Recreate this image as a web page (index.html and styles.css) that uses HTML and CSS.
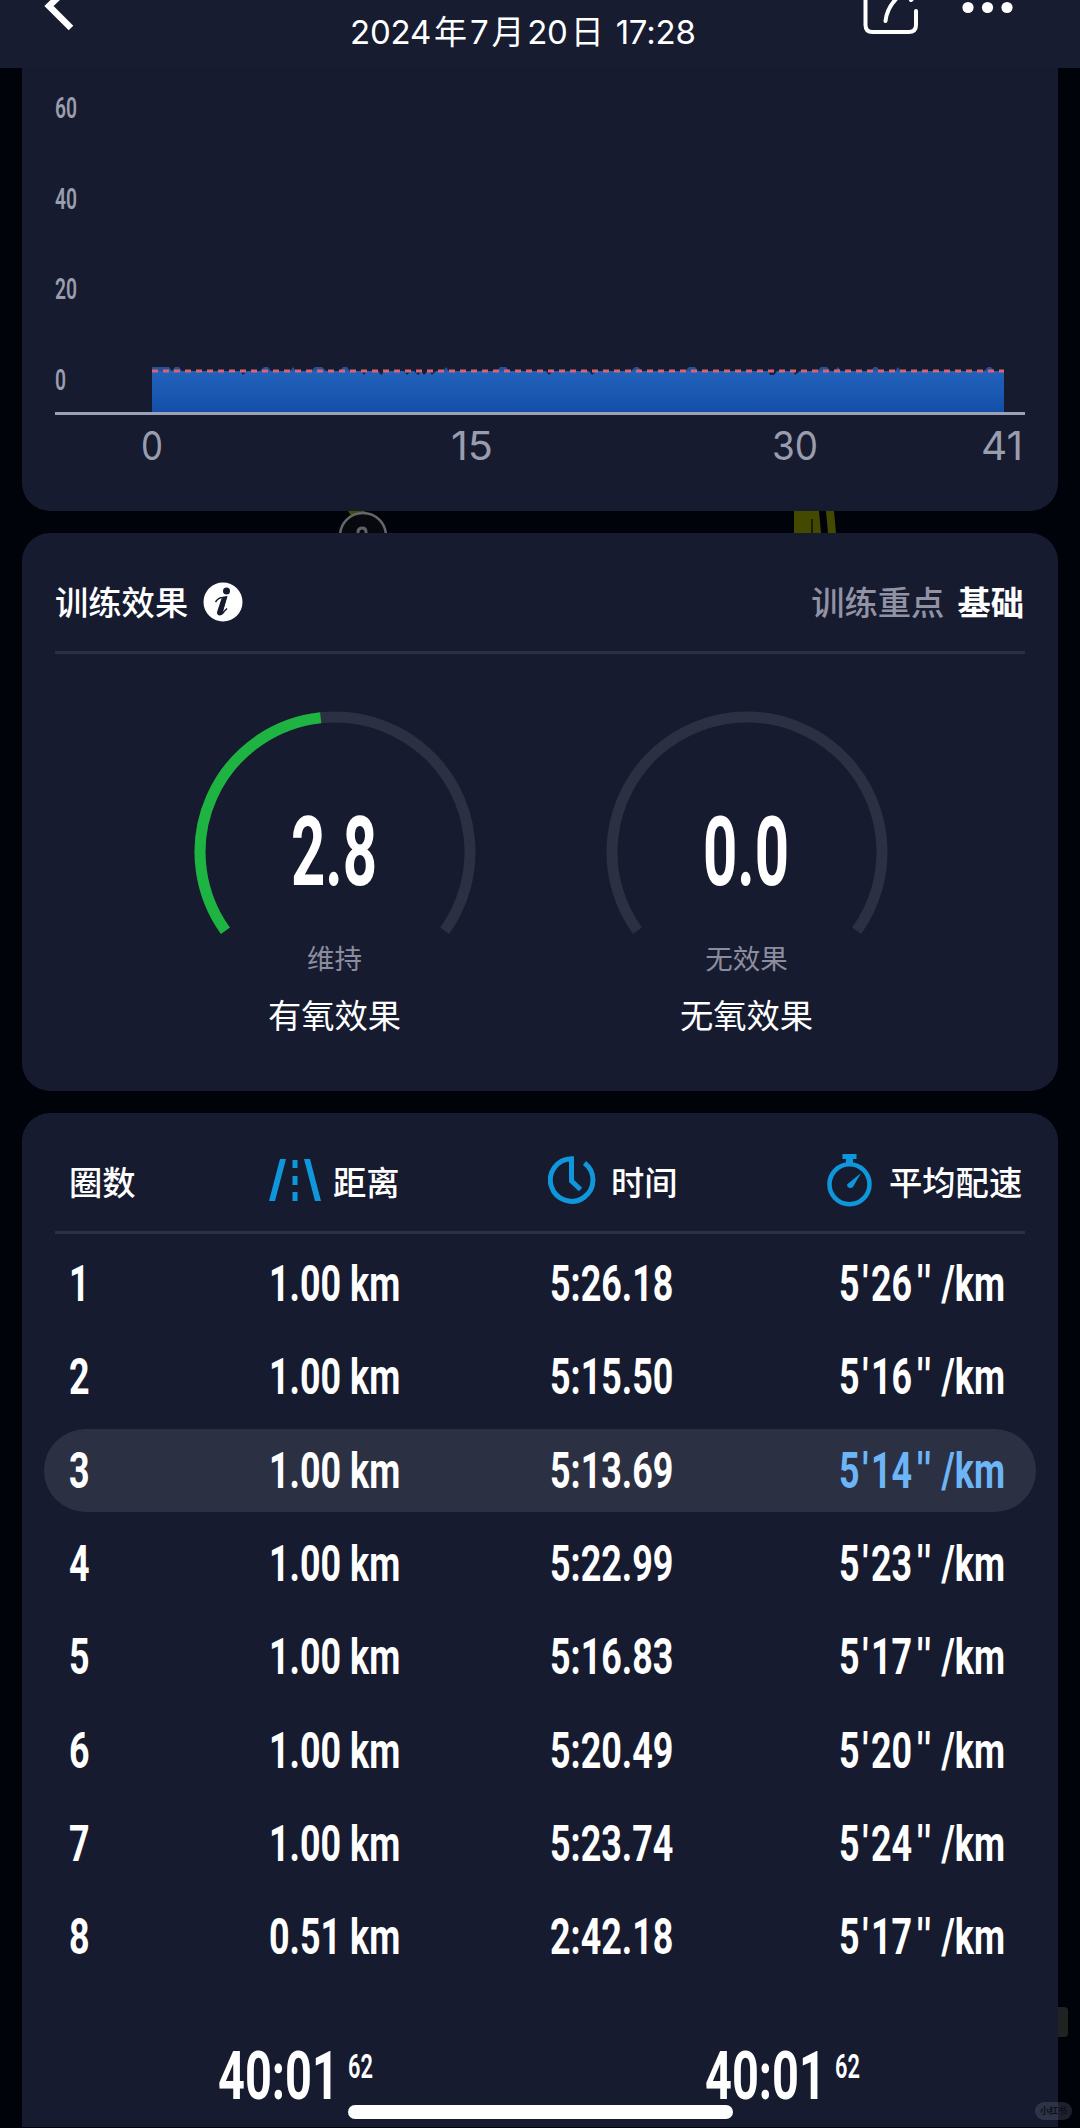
FILE: index.html
```html
<!DOCTYPE html>
<html lang="zh-CN">
<head>
    <meta charset="UTF-8">
    <meta name="viewport" content="width=device-width, initial-scale=1.0">
    <title>2024年7月20日 17:28</title>
    <link rel="stylesheet" href="styles.css">
</head>
<body>

<div class="screen">
    <header class="topbar">
        <svg class="back" width="34" height="34" viewBox="0 0 34 34">
            <path d="M34 -20 L7 6 L29 28" fill="none" stroke="#fff" stroke-width="6.500"/>
        </svg>
        <h1>2024<b>年</b>7<b>月</b>20<b>日</b> 17:28</h1>
        <div class="actions">
            <svg width="58" height="38" viewBox="0 0 58 38" fill="none" stroke="#fff" stroke-width="4" stroke-linecap="round">
                <path d="M3.500 -6V25Q3.500 32 10.500 32H46.500Q54 32 54 25V11"/>
                <path d="M23.500 21Q25 7 37 -4"/>
                <path d="M49 0L54 -5"/>
            </svg>
            <svg width="52" height="16" viewBox="0 0 52 16">
                <circle cx="6" cy="7.500" r="5.600" fill="#fff"/>
                <circle cx="25.500" cy="7.500" r="5.600" fill="#fff"/>
                <circle cx="45" cy="7.500" r="5.600" fill="#fff"/>
            </svg>
        </div>
    </header>

    <section class="card chart-card">
        <svg class="chart" width="1036" height="443" viewBox="22 68 1036 443">
            <defs>
                <linearGradient id="area" x1="0" y1="0" x2="0" y2="1">
                    <stop offset="0" stop-color="#2262bb"/>
                    <stop offset="1" stop-color="#134fa9"/>
                </linearGradient>
            </defs>
            <g class="y-label">
                <text x="55" y="118" textLength="22" lengthAdjust="spacingAndGlyphs">60</text>
                <text x="55" y="209" textLength="22" lengthAdjust="spacingAndGlyphs">40</text>
                <text x="55" y="299" textLength="22" lengthAdjust="spacingAndGlyphs">20</text>
                <text x="55" y="390" textLength="11" lengthAdjust="spacingAndGlyphs">0</text>
            </g>
            <rect x="152" y="371" width="852" height="42" fill="url(#area)"/>
            <path fill="#27509b" d="M152 371V367H169L172 371ZM172 371L175 367H179L182 371ZM260 371L264 367H268L271 371ZM290 371L293 367L296 371ZM311 371L315 367H322L326 371ZM340 371L343 367H347L350 371ZM443 371L446 367L449 371ZM497 371L500 367H506L509 371ZM631 371L635 367H638L642 371ZM685 371L689 367H695L698 371ZM817 371L821 367H827L830 371ZM834 371L838 367L841 371ZM871 371L874 367H877L880 371ZM895 371L898 367L901 371ZM984 371L988 367H991L994 371Z"/>
            <path fill="#1b1e38" d="M240 371H247L243 375ZM361 371H367L364 375ZM378 371H385L381 375ZM404 371H411L407 375ZM414 371H422L418 375ZM421 371H428L424 375ZM429 371H436L432 375ZM546 371H553L549 375ZM589 371H596L592 375ZM768 371H777L774 375H770ZM793 371H800L795 375Z"/>
            <path d="M152 371H1004" stroke="#d9646f" stroke-width="3" stroke-dasharray="6 5"/>
            <rect x="55" y="412" width="970" height="3" fill="#9ba2b5"/>
            <g class="x-label">
                <text x="141" y="459.500" textLength="22" lengthAdjust="spacingAndGlyphs">0</text>
                <text x="451" y="459.500" textLength="42" lengthAdjust="spacingAndGlyphs">15</text>
                <text x="772" y="459.500" textLength="46" lengthAdjust="spacingAndGlyphs">30</text>
                <text x="981" y="459.500" textLength="42" lengthAdjust="spacingAndGlyphs">41</text>
            </g>
        </svg>
    </section>

    <!-- strip of the route map between the cards -->
    <svg class="map-strip" width="1080" height="22" viewBox="0 511 1080 22">
        <path d="M348 511H366L352 517Z" fill="#454c06"/>
        <circle cx="363" cy="536" r="23" fill="#07090e" stroke="#65676b" stroke-width="2.500"/>
        <path d="M358 537V532Q358 528 362.500 528Q366 528 366 532V537" fill="none" stroke="#606267" stroke-width="3"/>
        <path d="M794 511H819L821 533H794Z" fill="#434a00"/>
        <path d="M826 511H834L836 533H828Z" fill="#434a00"/>
        <path d="M812 519V533" stroke="#1a1e04" stroke-width="2"/>
    </svg>

    <section class="card effect-card">
        <div class="effect-head">
            <h2>训练效果</h2>
            <svg class="info" width="40" height="40" viewBox="0 0 40 40">
                <circle cx="20" cy="20" r="19.500" fill="#fff"/>
                <circle cx="23.500" cy="9" r="3.500" fill="#171b2f"/>
                <path d="M12.500 20Q15.500 15.500 19.500 15.500L23.500 15L19.500 28.500Q19 31 21 29.500L24 26.500" fill="none" stroke="#171b2f" stroke-width="1.500"/>
                <path d="M18.500 16.500L24 14.500L20 28.500Q19.500 31 22 29.500Q19.500 33.500 16.500 33.500Q13 33 14.500 28.500Z" fill="#171b2f"/>
            </svg>
            <p class="focus">训练重点<strong>基础</strong></p>
        </div>
        <div class="gauges">
            <div class="gauge">
                <svg width="290" height="240" viewBox="-145 -145 290 240">
                    <path class="track" d="M-109.600 78.800A135 135 0 1 1 109.600 78.800"/>
                    <path class="value" d="M-109.600 78.800A135 135 0 0 1 -14.300 -134.200"/>
                    <text x="-44" y="32.500" textLength="86" lengthAdjust="spacingAndGlyphs">2.8</text>
                </svg>
                <span class="level">维持</span>
                <span class="name">有氧效果</span>
            </div>
            <div class="gauge">
                <svg width="290" height="240" viewBox="-145 -145 290 240">
                    <path class="track" d="M-109.600 78.800A135 135 0 1 1 109.600 78.800"/>
                    <text x="-44" y="32.500" textLength="86" lengthAdjust="spacingAndGlyphs">0.0</text>
                </svg>
                <span class="level">无效果</span>
                <span class="name">无氧效果</span>
            </div>
        </div>
    </section>

    <section class="card laps-card">
        <div class="row laps-head">
            <span>圈数</span>
            <span>
                <svg width="52" height="42" viewBox="0 0 52 42" fill="#0f97db">
                    <path d="M11 0H17L6 42H0ZM35 0H41L52 42H46ZM23.500 1H28.500V9H23.500ZM23.500 17H28.500V26H23.500ZM23.500 33H28.500V42H23.500Z"/>
                </svg>距离
            </span>
            <span>
                <svg class="clock" width="48" height="48" viewBox="0 0 48 48" fill="none" stroke="#0f97db" stroke-width="5">
                    <path d="M36.500 7A21.300 21.300 0 1 1 23.500 2.700V25L32.500 33.500"/>
                </svg>时间
            </span>
            <span>
                <svg class="stopwatch" width="45" height="53" viewBox="0 0 45 53">
                    <circle cx="22.500" cy="30.300" r="20" fill="none" stroke="#0f97db" stroke-width="4.500"/>
                    <path d="M15.500 0H29.500V5H26V10H19V5H15.500ZM34 19L26 33A3.500 3.500 0 0 1 20 30.500Z" fill="#0f97db"/>
                </svg>平均配速
            </span>
        </div>
        <div class="laps">
            <div class="row"><span>1</span><span>1.00 km</span><span>5:26.18</span><span>5<i>'</i>26<i>''</i> /km</span></div>
            <div class="row"><span>2</span><span>1.00 km</span><span>5:15.50</span><span>5<i>'</i>16<i>''</i> /km</span></div>
            <div class="row best"><span>3</span><span>1.00 km</span><span>5:13.69</span><span>5<i>'</i>14<i>''</i> /km</span></div>
            <div class="row"><span>4</span><span>1.00 km</span><span>5:22.99</span><span>5<i>'</i>23<i>''</i> /km</span></div>
            <div class="row"><span>5</span><span>1.00 km</span><span>5:16.83</span><span>5<i>'</i>17<i>''</i> /km</span></div>
            <div class="row"><span>6</span><span>1.00 km</span><span>5:20.49</span><span>5<i>'</i>20<i>''</i> /km</span></div>
            <div class="row"><span>7</span><span>1.00 km</span><span>5:23.74</span><span>5<i>'</i>24<i>''</i> /km</span></div>
            <div class="row"><span>8</span><span>0.51 km</span><span>2:42.18</span><span>5<i>'</i>17<i>''</i> /km</span></div>
        </div>
        <div class="totals">
            <div><span>40:01</span><sup>62</sup></div>
            <div><span>40:01</span><sup>62</sup></div>
        </div>
    </section>

    <div class="map-button"></div>
    <div class="home-bar"></div>
    <div class="watermark">小红书</div>
</div>

</body>
</html>
```
FILE: styles.css
```css
* {
    box-sizing: border-box;
}
body {
    margin: 0;
    background: #01030b;
    color: #fff;
    font-family: Inter, "Noto Sans CJK SC", sans-serif;
}
svg {
    display: block;
}
.screen {
    position: relative;
    width: 1080px;
    height: 2128px;
    overflow: hidden;
}
.topbar {
    display: flex;
    align-items: flex-start;
    height: 68px;
    padding: 0 46px 0 42px;
    background: #171c30;
}
.topbar h1 {
    margin: 12px 0 0 274px;
    width: 350px;
    font-size: 33px;
    font-weight: 400;
    line-height: 40px;
    letter-spacing: -.2px;
    white-space: nowrap;
}
.topbar h1 b {
    font-weight: 400;
    margin: 0 3px;
}
.actions {
    display: flex;
    gap: 42px;
    margin-left: auto;
    margin-right: 20px;
}
.card {
    margin: 0 22px;
    background: #171b2f;
    border-radius: 28px;
}
.chart-card {
    height: 443px;
    border-radius: 0 0 28px 28px;
}
.y-label {
    font: 600 29px Roboto, sans-serif;
    fill: #9a9dad;
}
.x-label {
    font: 400 39px Inter, sans-serif;
    fill: #9a9dad;
}
.effect-card {
    height: 558px;
    padding: 0 33px;
}
.effect-head {
    display: flex;
    align-items: center;
    height: 121px;
    padding-top: 16px;
    border-bottom: 3px solid #2c3043;
}
.effect-head h2 {
    margin: 0 15px 0 0;
    font-size: 33.3px;
    font-weight: 500;
}
.info {
    margin-top: 3px;
}
.focus {
    margin: 0 1px 0 auto;
    font-size: 33.3px;
    font-weight: 500;
    color: #9193a4;
}
.focus strong {
    margin-left: 13px;
    font-weight: 700;
    color: #fff;
}
.gauges {
    display: flex;
    gap: 122px;
    padding: 53px 0 0 134.5px;
}
.gauge {
    display: flex;
    flex-direction: column;
    align-items: center;
    width: 290px;
}
.gauge svg {
    flex: none;
}
.gauge path {
    fill: none;
    stroke-width: 11;
}
.gauge .track {
    stroke: #2c3043;
}
.gauge .value {
    stroke: #1eb441;
}
.gauge text {
    font: 700 96px Roboto, sans-serif;
    fill: #fff;
}
.level {
    margin-top: -8px;
    font-size: 27.5px;
    line-height: 40px;
    color: #8b8d9f;
}
.name {
    margin-top: 13px;
    font-size: 33.3px;
    line-height: 48px;
}
.laps-card {
    height: 1014px;
    margin-top: 22px;
    padding: 0 22px;
    border-radius: 28px 28px 0 0;
}
.row {
    display: grid;
    grid-template-columns: 200px 281px 289px 1fr;
    align-items: center;
    padding-left: 24.5px;
}
.laps-head {
    height: 121px;
    margin: 0 11px;
    padding: 16px 0 0 14px;
    grid-template-columns: 200px 279px 279px 1fr;
    border-bottom: 3px solid #2c3043;
    font-size: 33.3px;
    font-weight: 500;
}
.laps-head span {
    display: flex;
    align-items: center;
    gap: 12px;
    white-space: nowrap;
}
.laps-head .clock {
    margin-right: 3px;
}
.laps-head .stopwatch {
    margin-right: 5px;
}
.laps {
    display: flex;
    flex-direction: column;
    gap: 10.33px;
    padding-top: 8px;
}
.laps .row {
    height: 83px;
    border-radius: 42px;
    font: 700 50.5px/83px Roboto, sans-serif;
}
.laps .row span {
    white-space: nowrap;
    transform: scaleX(.71);
    transform-origin: 0 50%;
}
.laps i {
    font-style: normal;
    margin: 0 4px;
}
.laps i:last-child {
    margin: 0 -1px 0 7px;
    letter-spacing: 4px;
}
.laps .best {
    background: #2c3043;
}
.best span:last-child {
    color: #6cb6f8;
}
.totals {
    display: flex;
    padding: 58px 0 0 174px;
    font-family: Roboto, sans-serif;
    font-weight: 700;
}
.totals div {
    display: flex;
    flex: none;
    width: 487px;
}
.totals span {
    width: 130px;
    font-size: 67px;
    line-height: 80px;
    transform: scaleX(.7);
    transform-origin: 0 50%;
}
.totals sup {
    font-size: 33px;
    font-weight: 600;
    line-height: 62px;
    transform: scaleX(.66);
    transform-origin: 0 50%;
}
.map-button {
    position: absolute;
    left: 1058px;
    top: 2007px;
    width: 10px;
    height: 30px;
    background: #202322;
    border-radius: 0 4px 4px 0;
}
.home-bar {
    position: absolute;
    left: 348px;
    top: 2105px;
    width: 385px;
    height: 14px;
    border-radius: 7px;
    background: #fff;
}
.watermark {
    position: absolute;
    left: 1035px;
    top: 2102px;
    width: 37px;
    height: 18px;
    border-radius: 9px;
    background: rgba(120, 125, 145, .25);
    color: #0d101c;
    font-size: 9px;
    font-weight: 700;
    line-height: 18px;
    text-align: center;
}
```
